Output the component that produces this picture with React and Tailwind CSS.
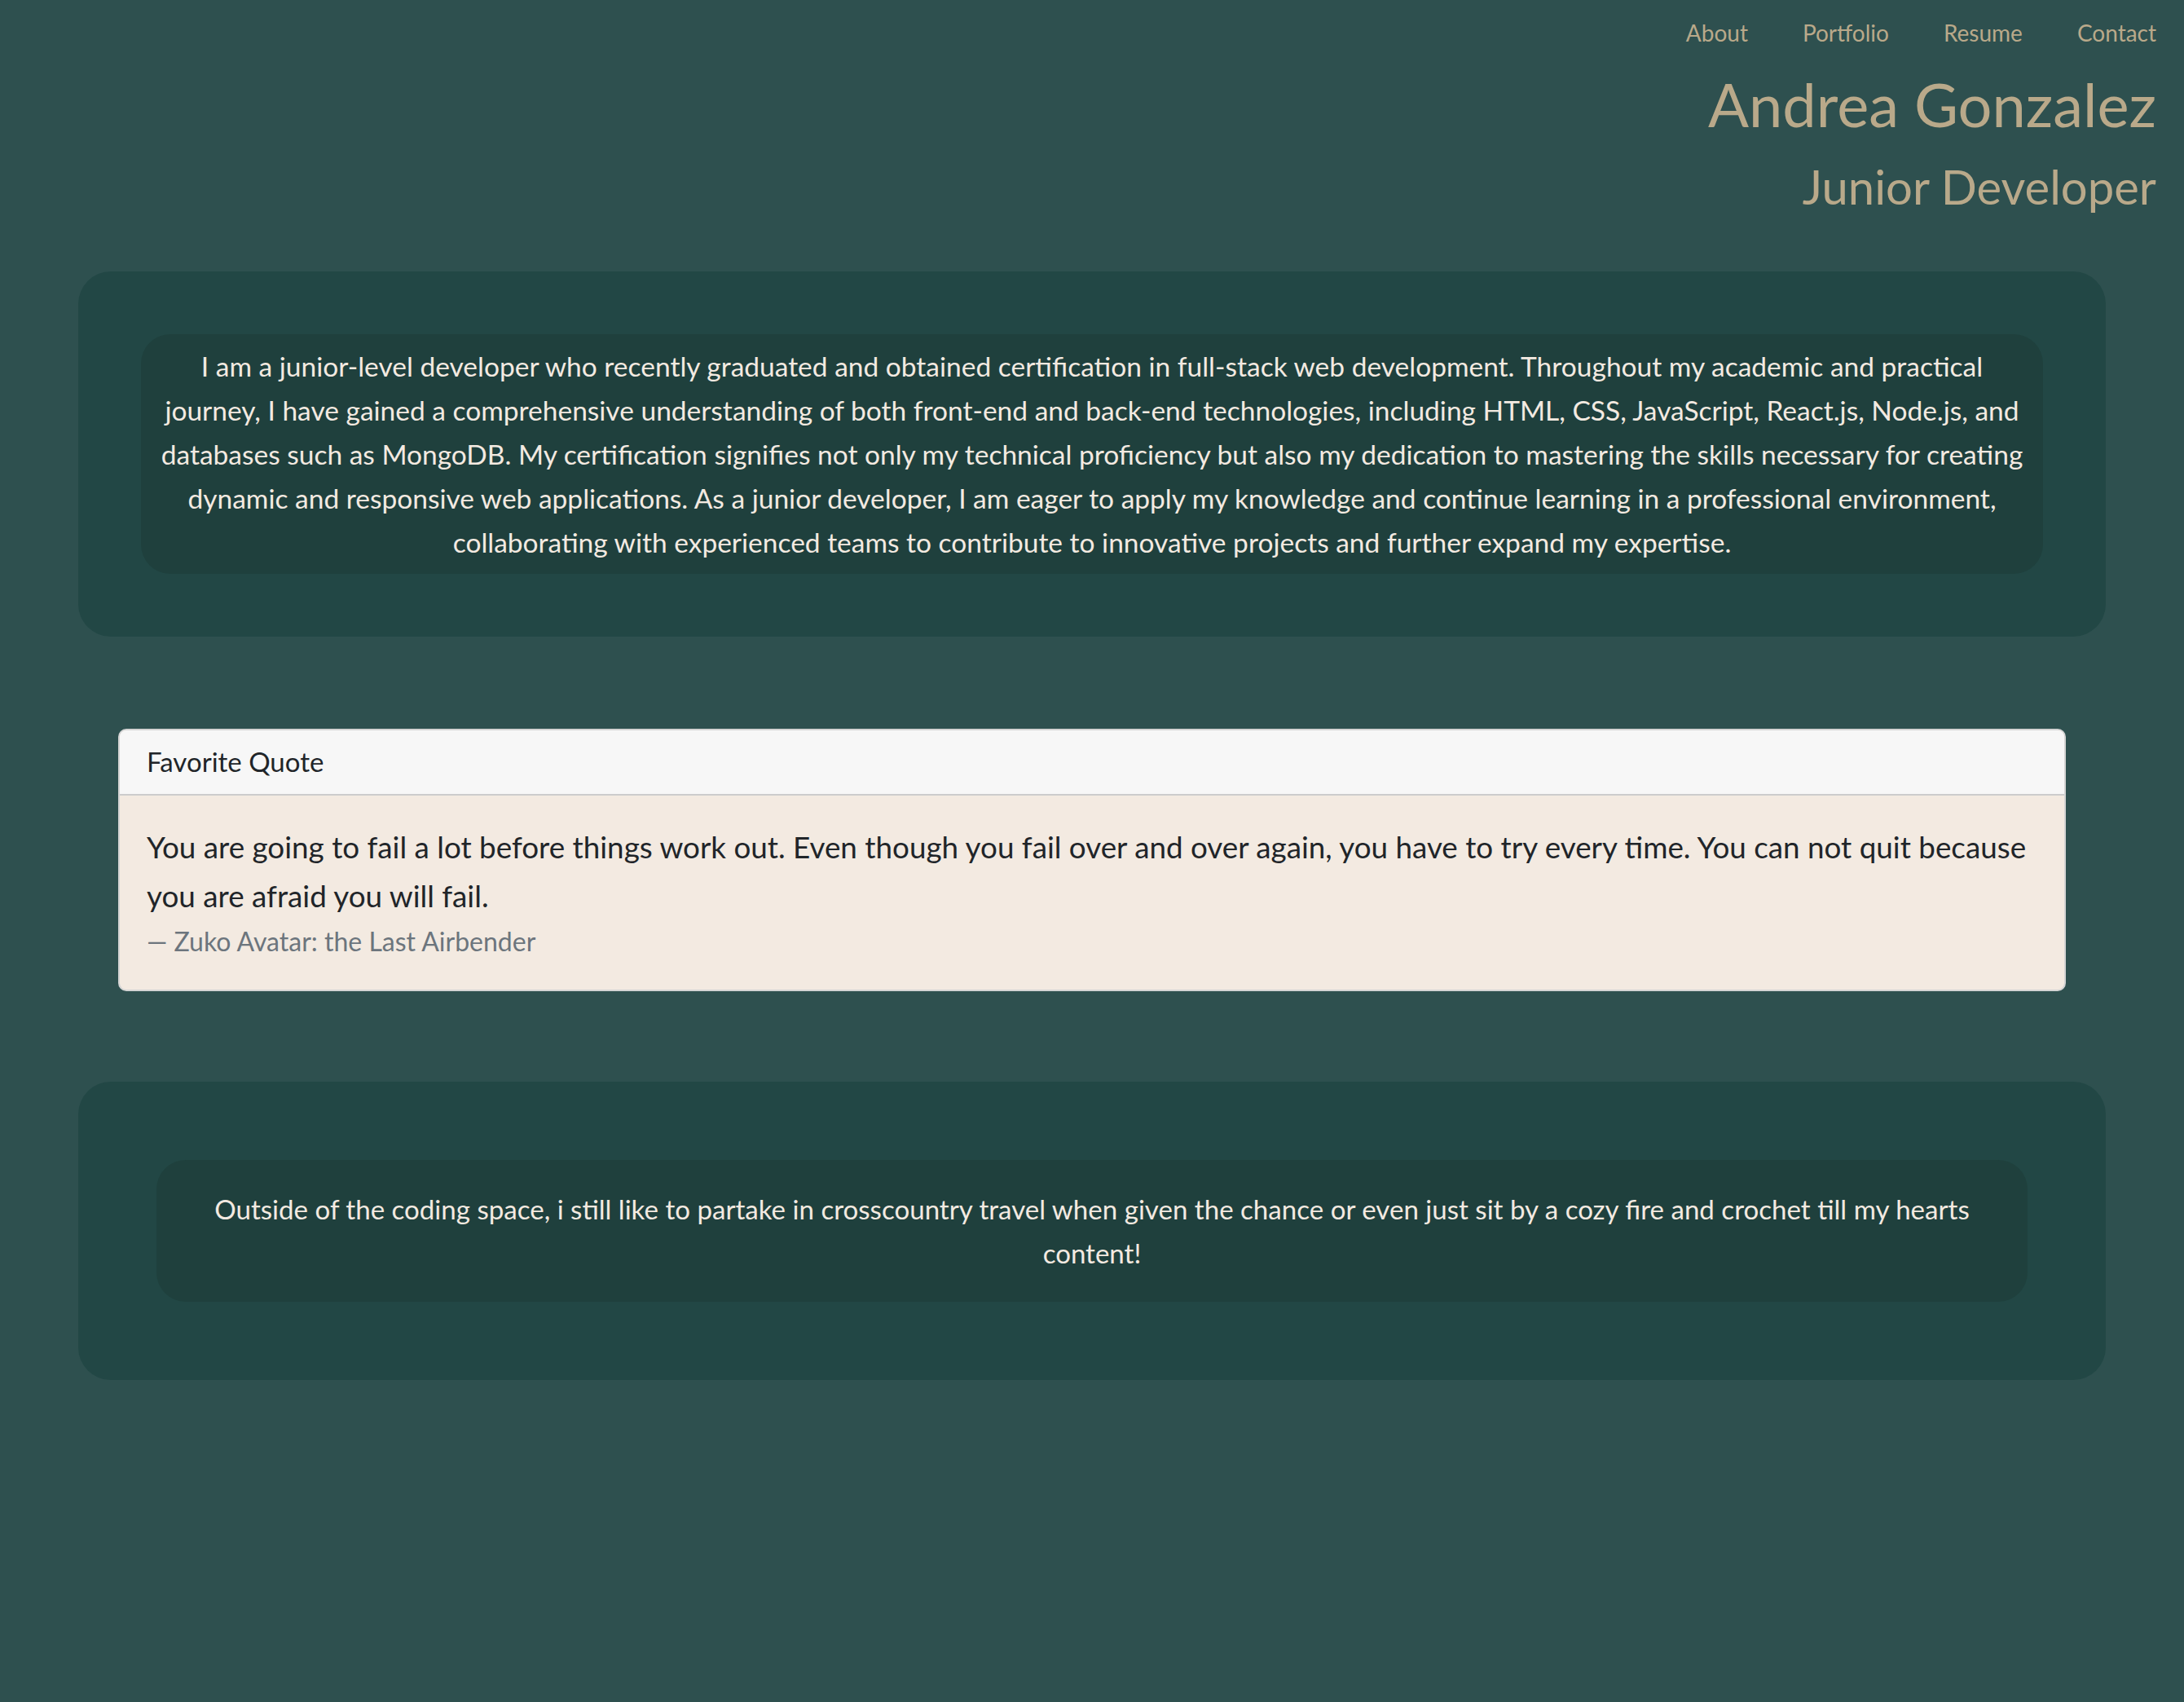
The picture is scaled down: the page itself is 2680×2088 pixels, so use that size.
export default function App() {
  const font = "font-['Lato','Open_Sans',sans-serif]";
  return (
    <div className={`min-h-screen bg-[#2e504f] ${font}`}>
      <header className="flex flex-col items-end pr-[34px] text-[#b9a98a]">
        <nav className="mt-[20px] flex gap-[67px] text-[28px] leading-[40px]">
          <a href="#about">About</a>
          <a href="#portfolio">Portfolio</a>
          <a href="#resume">Resume</a>
          <a href="#contact">Contact</a>
        </nav>
        <h1 className="mt-[31px] text-[74px] leading-[74px] font-normal">Andrea Gonzalez</h1>
        <h2 className="mt-[35px] text-[58px] leading-[58px] font-normal">Junior Developer</h2>
      </header>

      <main className="flex flex-col">
        <section className="mx-[96px] mt-[75px] rounded-[40px] bg-[#224745] p-[77px]">
          <div className="rounded-[36px] bg-[#1f403d] px-[16px] py-[12px] text-center text-[33.5px] leading-[54px] text-[#f3eae1]">
            <p>
              I am a junior-level developer who recently graduated and obtained certification in full-stack web development. Throughout my academic and practical
              <br />
              journey, I have gained a comprehensive understanding of both front-end and back-end technologies, including HTML, CSS, JavaScript, React.js, Node.js, and
              <br />
              databases such as MongoDB. My certification signifies not only my technical proficiency but also my dedication to mastering the skills necessary for creating
              <br />
              dynamic and responsive web applications. As a junior developer, I am eager to apply my knowledge and continue learning in a professional environment,
              <br />
              collaborating with experienced teams to contribute to innovative projects and further expand my expertise.
            </p>
          </div>
        </section>

        <section className="mx-[145px] mt-[113px] overflow-hidden rounded-[10px] border-2 border-[#d4d4d4] bg-[#f3eae1]">
          <div className="flex h-[80px] items-center border-b-2 border-[#cccccc] bg-[#f7f7f7] px-[33px] text-[33px] text-[#212529]">
            Favorite Quote
          </div>
          <div className="px-[33px] pb-[38px] pt-[33px]">
            <blockquote className="text-[36.8px] leading-[60px] text-[#212529]">
              <p>
                You are going to fail a lot before things work out. Even though you fail over and over again, you have to try every time. You can not quit because
                <br />
                you are afraid you will fail.
              </p>
            </blockquote>
            <p className="mt-[5px] text-[32px] leading-[42px] text-[#6c757d]">— Zuko Avatar: the Last Airbender</p>
          </div>
        </section>

        <section className="mx-[96px] mt-[111px] mb-[200px] rounded-[40px] bg-[#224745] p-[96px]">
          <div className="rounded-[36px] bg-[#1f403d] px-[32px] py-[33px] text-center text-[33.1px] leading-[54px] text-[#f3eae1]">
            <p>
              Outside of the coding space, i still like to partake in crosscountry travel when given the chance or even just sit by a cozy fire and crochet till my hearts
              <br />
              content!
            </p>
          </div>
        </section>
      </main>
    </div>
  );
}
